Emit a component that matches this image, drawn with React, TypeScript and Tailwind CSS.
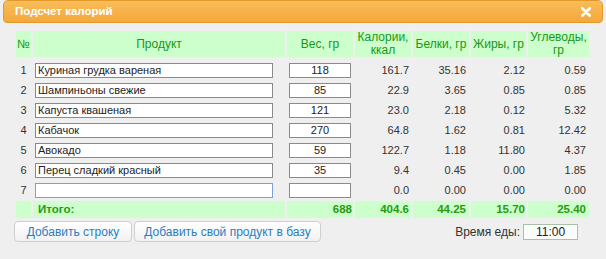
import { useState } from 'react';

interface Row {
  name: string;
  weight: string;
  kcal: string;
  protein: string;
  fat: string;
  carbs: string;
}

const rows: Row[] = [
  { name: 'Куриная грудка вареная', weight: '118', kcal: '161.7', protein: '35.16', fat: '2.12', carbs: '0.59' },
  { name: 'Шампиньоны свежие', weight: '85', kcal: '22.9', protein: '3.65', fat: '0.85', carbs: '0.85' },
  { name: 'Капуста квашеная', weight: '121', kcal: '23.0', protein: '2.18', fat: '0.12', carbs: '5.32' },
  { name: 'Кабачок', weight: '270', kcal: '64.8', protein: '1.62', fat: '0.81', carbs: '12.42' },
  { name: 'Авокадо', weight: '59', kcal: '122.7', protein: '1.18', fat: '11.80', carbs: '4.37' },
  { name: 'Перец сладкий красный', weight: '35', kcal: '9.4', protein: '0.45', fat: '0.00', carbs: '1.85' },
  { name: '', weight: '', kcal: '0.0', protein: '0.00', fat: '0.00', carbs: '0.00' },
];

const cols = 'grid grid-cols-[15px_252px_66px_56px_56px_55px_61px] gap-x-[2px]';

export default function App() {
  const [time, setTime] = useState('11:00');

  return (
    <div className="w-[606px] h-[259px] bg-[#efefef] overflow-hidden text-[#333] font-['Liberation_Sans',Arial,sans-serif]">
      {/* Title bar */}
      <div className="mx-[3px] h-[23px] rounded-b-[4px] rounded-t-[5px] border border-[#e3982c] bg-gradient-to-b from-[#f8bd58] to-[#f4a83a] flex items-center justify-between pl-[11px] pr-[11px]">
        <span className="text-white font-bold text-[11.5px]">Подсчет калорий</span>
        <svg width="10" height="10" viewBox="0 0 10 10" className="mt-[1px]">
          <path d="M1.4 1.4 L8.6 8.6 M8.6 1.4 L1.4 8.6" stroke="white" strokeWidth="2.8" strokeLinecap="round" />
        </svg>
      </div>

      <div className="border-b border-[#d9d9d9] h-[230px]">
        {/* Header */}
        <div className={`${cols} ml-[16px] mt-[8px] h-[26px] text-[12px] text-[#179817]`}>
          <div className="bg-[#ccffcc] flex items-center justify-center">№</div>
          <div className="bg-[#ccffcc] flex items-center justify-center">Продукт</div>
          <div className="bg-[#ccffcc] flex items-center justify-center">Вес, гр</div>
          <div className="bg-[#ccffcc] flex items-center justify-center text-center leading-[13px]">Калории,<br />ккал</div>
          <div className="bg-[#ccffcc] flex items-center justify-center">Белки, гр</div>
          <div className="bg-[#ccffcc] flex items-center justify-center">Жиры, гр</div>
          <div className="bg-[#ccffcc] flex items-center justify-center text-center leading-[13px]">Углеводы,<br />гр</div>
        </div>

        {/* Rows */}
        <div className="mt-[3px] text-[11px]">
          {rows.map((r, i) => (
            <div key={i} className={`${cols} ml-[16px] h-[20px] items-center`}>
              <div className="text-center">{i + 1}</div>
              <div className="pl-[2px] pr-[12px]">
                <input
                  defaultValue={r.name}
                  className={`w-full h-[15px] bg-white px-[2px] text-[11px] text-[#222] outline-none border ${i === 6 ? 'border-[#7b9fdc]' : 'border-[#8a8a8a]'}`}
                />
              </div>
              <div className="pl-[2px] pr-[2px]">
                <input
                  defaultValue={r.weight}
                  className="w-[62px] h-[15px] bg-white text-center text-[11px] text-[#222] outline-none border border-[#8a8a8a]"
                />
              </div>
              <div className="text-right pr-[2px]">{r.kcal}</div>
              <div className="text-right pr-[3px]">{r.protein}</div>
              <div className="text-right pr-[1px]">{r.fat}</div>
              <div className="text-right pr-[3px]">{r.carbs}</div>
            </div>
          ))}

          {/* Total */}
          <div className={`${cols} ml-[16px] mt-[1px] h-[17px] items-stretch font-bold text-[#2a9a12] text-[11.5px]`}>
            <div className="bg-[#ccffcc]" />
            <div className="bg-[#ccffcc] flex items-center pl-[5px]">Итого:</div>
            <div className="bg-[#ccffcc] flex items-center justify-end pr-[1px]">688</div>
            <div className="bg-[#ccffcc] flex items-center justify-end pr-[2px]">404.6</div>
            <div className="bg-[#ccffcc] flex items-center justify-end pr-[3px]">44.25</div>
            <div className="bg-[#ccffcc] flex items-center justify-end pr-[1px]">15.70</div>
            <div className="bg-[#ccffcc] flex items-center justify-end pr-[3px]">25.40</div>
          </div>
        </div>

        {/* Footer */}
        <div className="flex items-center ml-[14px] mt-[3px] pr-[28px] text-[12px]">
          <button className="w-[118px] h-[21px] rounded-[4px] border border-[#cfcfcf] bg-gradient-to-b from-white to-[#f1f1f1] text-[#2b7dbf]">
            Добавить строку
          </button>
          <button className="ml-[2px] w-[187px] h-[21px] rounded-[4px] border border-[#cfcfcf] bg-gradient-to-b from-white to-[#f1f1f1] text-[#2b7dbf]">
            Добавить свой продукт в базу
          </button>
          <div className="ml-auto flex items-center gap-[3px]">
            <span className="text-[#333]">Время еды:</span>
            <input
              value={time}
              onChange={(e) => setTime(e.target.value)}
              className="w-[55px] h-[16px] bg-[#fbfdfb] border border-[#a8c2a8] text-center text-[12px] text-[#222] outline-none"
            />
          </div>
        </div>
      </div>
    </div>
  );
}
